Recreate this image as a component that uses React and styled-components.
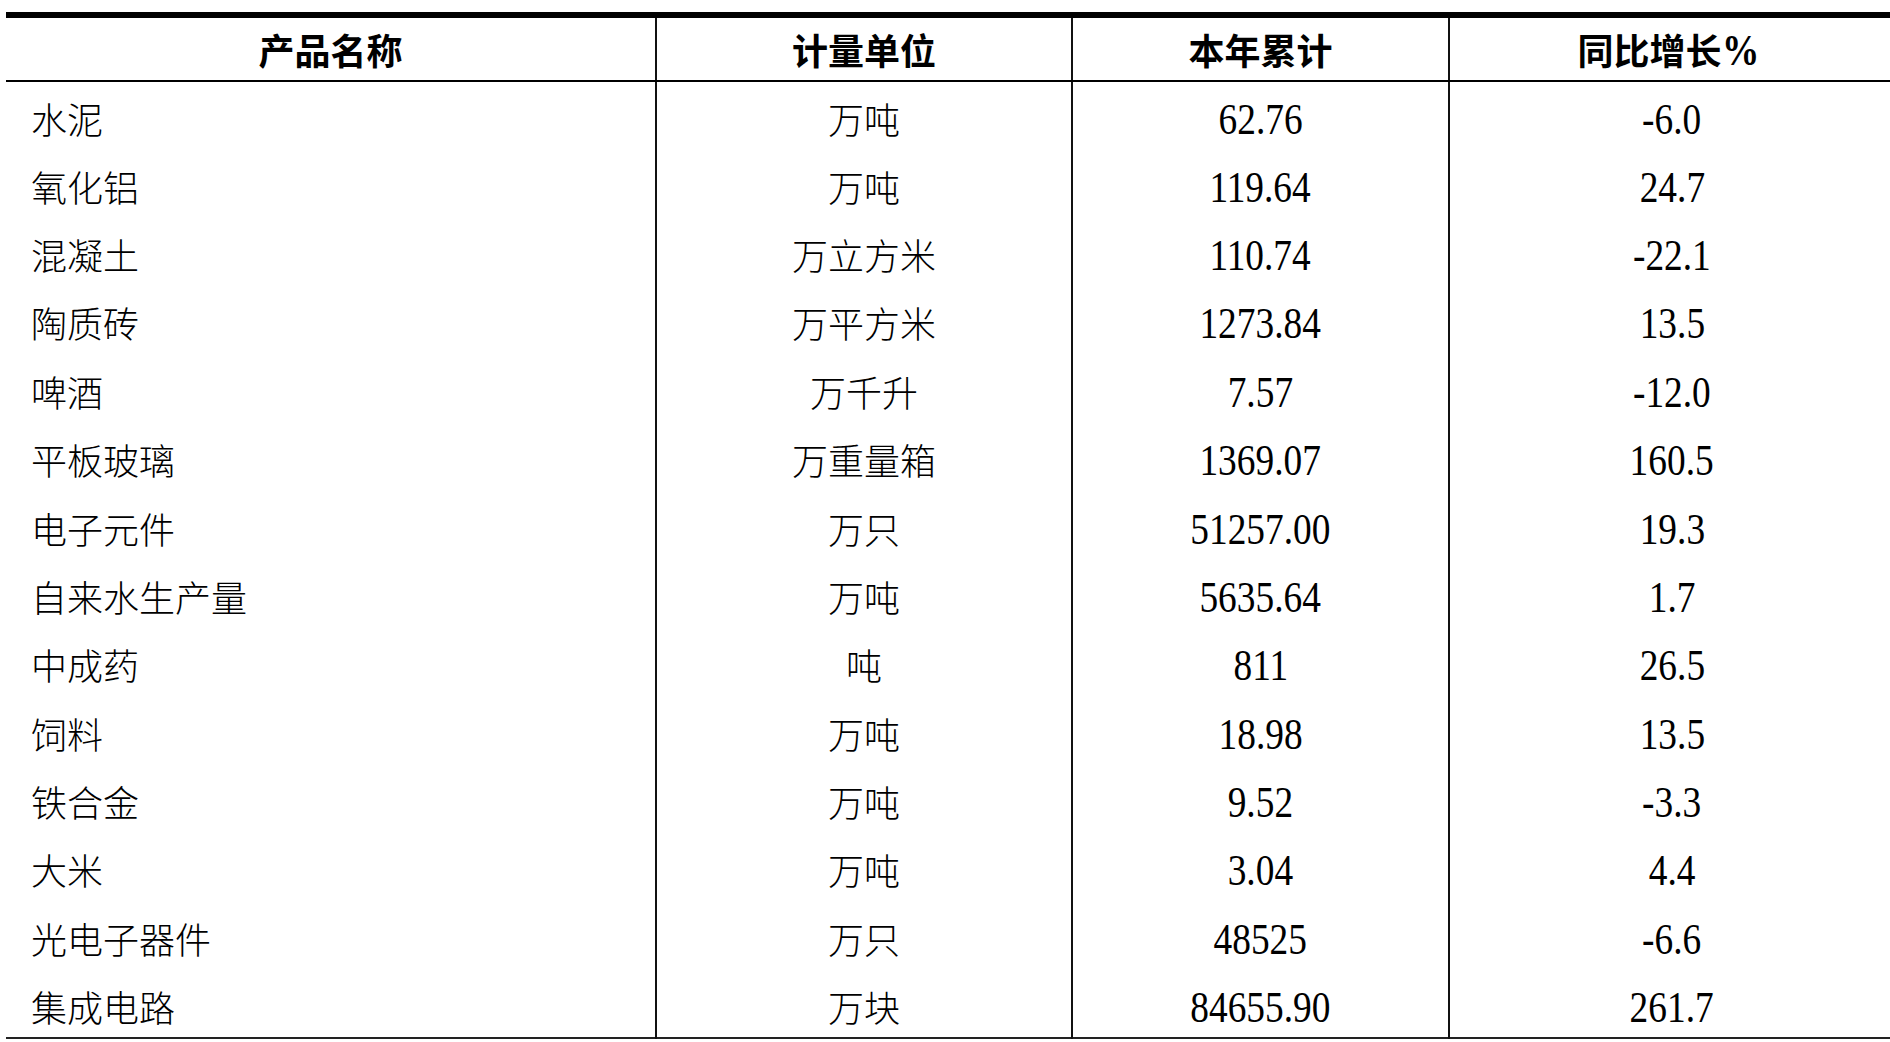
import React from "react";
import styled, { createGlobalStyle } from "styled-components";

const GlobalStyle = createGlobalStyle`
  html, body {
    margin: 0;
    padding: 0;
    background: #fff;
    overflow: hidden;
  }
  body {
    font-family: "Liberation Serif", "Noto Sans CJK SC", serif;
    color: #000;
  }
`;

const Page = styled.div`
  width: 1890px;
  height: 1042px;
  padding: 12px 0 0 6px;
  box-sizing: border-box;
  overflow: hidden;
`;

const Table = styled.table`
  width: 1888px;
  border-collapse: collapse;
  table-layout: fixed;
  border-top: 6px solid #000;
  border-bottom: 2px solid #222;
  font-family: "Liberation Serif", "Noto Sans CJK SC", serif;
  font-size: 36px;
`;

const HeadCell = styled.th`
  height: 62px;
  padding: 0;
  font-family: "Noto Sans CJK SC", sans-serif;
  font-weight: 700;
  text-align: center;
  vertical-align: middle;
  border-bottom: 2px solid #000;
  border-left: ${(p) => (p.$first ? "none" : "2px solid #111")};
`;

const Row = styled.tr`
  height: 68.4px;
`;

const Cell = styled.td`
  padding: ${(p) => (p.$first ? "4px 0 0 25px" : "4px 0 0 0")};
  font-family: "Noto Sans CJK SC", sans-serif;
  font-weight: 300;
  text-align: ${(p) => (p.$first ? "left" : "center")};
  vertical-align: middle;
  white-space: nowrap;
  border-left: ${(p) => (p.$first ? "none" : "2px solid #111")};
`;

/* numbers in the source are set tall and narrow */
const Num = styled.span`
  display: inline-block;
  font-family: "Liberation Serif", serif;
  font-size: 45px;
  font-weight: ${(p) => (p.$bold ? 700 : 400)};
  line-height: 1;
  transform: scaleX(0.83);
  transform-origin: ${(p) => (p.$origin ? p.$origin : "center")};
`;

const columns = [
  { title: "产品名称", width: 650 },
  { title: "计量单位", width: 416 },
  { title: "本年累计", width: 377 },
  { title: "同比增长", suffix: "%", width: 445 },
];

const rows = [
  ["水泥", "万吨", "62.76", "-6.0"],
  ["氧化铝", "万吨", "119.64", "24.7"],
  ["混凝土", "万立方米", "110.74", "-22.1"],
  ["陶质砖", "万平方米", "1273.84", "13.5"],
  ["啤酒", "万千升", "7.57", "-12.0"],
  ["平板玻璃", "万重量箱", "1369.07", "160.5"],
  ["电子元件", "万只", "51257.00", "19.3"],
  ["自来水生产量", "万吨", "5635.64", "1.7"],
  ["中成药", "吨", "811", "26.5"],
  ["饲料", "万吨", "18.98", "13.5"],
  ["铁合金", "万吨", "9.52", "-3.3"],
  ["大米", "万吨", "3.04", "4.4"],
  ["光电子器件", "万只", "48525", "-6.6"],
  ["集成电路", "万块", "84655.90", "261.7"],
];

export default function App() {
  return (
    <>
      <GlobalStyle />
      <Page>
        <Table>
          <colgroup>
            {columns.map((c) => (
              <col key={c.title} style={{ width: c.width }} />
            ))}
          </colgroup>
          <thead>
            <tr>
              {columns.map((c, i) => (
                <HeadCell key={c.title} $first={i === 0}>
                  {c.title}
                  {c.suffix && (
                    <Num $bold $origin="left">
                      {c.suffix}
                    </Num>
                  )}
                </HeadCell>
              ))}
            </tr>
          </thead>
          <tbody>
            {rows.map((r) => (
              <Row key={r[0]}>
                {r.map((v, i) => (
                  <Cell key={i} $first={i === 0}>
                    {i >= 2 ? <Num>{v}</Num> : v}
                  </Cell>
                ))}
              </Row>
            ))}
          </tbody>
        </Table>
      </Page>
    </>
  );
}
